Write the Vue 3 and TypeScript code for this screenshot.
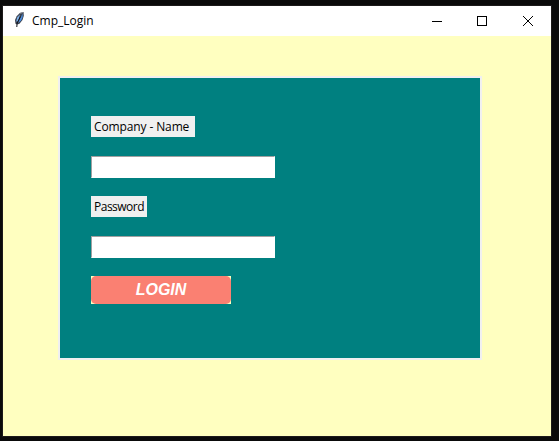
<script setup lang="ts">
import { ref } from 'vue'

const company = ref('')
const password = ref('')
</script>

<template>
  <div class="desktop">
    <main class="window">
      <header class="titlebar">
        <svg class="feather" width="16" height="18" viewBox="0 0 16 18">
          <path d="M3.5 12.8 L3 9 L4.8 5 L7.8 2 L11.6 1 L11.8 4.8 L10.5 9 L7.5 12.8 L5 13.4 Z" fill="#3c4350" />
          <path d="M4.2 10.5 L5.2 6.5 L8 3.5 L6 10.5 Z" fill="#7db2ee" />
          <path d="M6 12 L8 8 L10.7 2.6 L10.6 6.3 L9 9.8 Z" fill="#4a8ee0" />
          <path d="M4.5 5.8 L7.5 2.5 L11.2 1.5" fill="none" stroke="#858b95" stroke-width="1" />
          <path d="M4.8 16 L5.1 12 L8.5 5.5" fill="none" stroke="#10131a" stroke-width="1" />
        </svg>
        <span class="title">Cmp_Login</span>
        <div class="controls">
          <button class="control" aria-label="Minimize">
            <svg width="11" height="11" shape-rendering="crispEdges"><path d="M0 5.5H10" stroke="#000" /></svg>
          </button>
          <button class="control" aria-label="Maximize">
            <svg width="11" height="11" shape-rendering="crispEdges"><rect x="0.5" y="0.5" width="9" height="9" fill="none" stroke="#000" /></svg>
          </button>
          <button class="control" aria-label="Close">
            <svg width="11" height="11"><path d="M0 0L10 10M10 0L0 10" stroke="#000" stroke-width="1" /></svg>
          </button>
        </div>
      </header>
      <form class="panel" @submit.prevent>
        <label class="label company" for="company">Company - Name</label>
        <input id="company" v-model="company" class="entry" type="text" />
        <label class="label password" for="password">Password</label>
        <input id="password" v-model="password" class="entry" type="password" />
        <div class="button-canvas">
          <button class="login" type="submit">LOGIN</button>
        </div>
      </form>
    </main>
  </div>
</template>

<style>
body {
  margin: 0;
  overflow: hidden;
}
</style>

<style scoped>
.desktop {
  box-sizing: border-box;
  width: 559px;
  height: 441px;
  padding: 5px 0 0 2px;
  background: #0a0a0a;
}
.window {
  width: 548px;
  height: 430px;
  border: 1px solid #1c1a1a;
  background: #ffffc0;
  font-family: "Open Sans", "Noto Sans", sans-serif;
  font-size: 12px;
  color: #000;
}
.titlebar {
  display: flex;
  align-items: center;
  box-sizing: border-box;
  height: 30px;
  padding-left: 9px;
  background: #fff;
}
.feather {
  margin-top: -2px;
}
.title {
  margin-left: 4px;
  line-height: 30px;
}
.controls {
  display: flex;
  margin-left: auto;
}
.control {
  display: flex;
  align-items: center;
  justify-content: center;
  width: 45.5px;
  height: 30px;
  padding: 0;
  border: 0;
  background: transparent;
}
.panel {
  box-sizing: border-box;
  display: flex;
  flex-direction: column;
  align-items: flex-start;
  width: 424px;
  height: 284px;
  margin: 40px 0 0 55px;
  padding: 38px 0 0 31px;
  border: 2px solid #f0f0f0;
  background: #008080;
}
.label {
  box-sizing: border-box;
  height: 21px;
  margin: 0 0 19px;
  padding-left: 3px;
  background: #f0f0f0;
  line-height: 21px;
  white-space: nowrap;
}
.company {
  width: 104px;
  letter-spacing: -0.12px;
}
.password {
  width: 56px;
  letter-spacing: -0.5px;
}
.entry {
  box-sizing: border-box;
  width: 184px;
  height: 22px;
  margin: 0 0 18px;
  padding: 0 3px;
  border: 1px solid #fff;
  border-top-color: #a0a0a0;
  border-left-color: #a0a0a0;
  border-radius: 0;
  outline: none;
  background: #fff;
  font: inherit;
}
.button-canvas {
  width: 140px;
  height: 28px;
  background: #ffffc0;
}
.login {
  display: block;
  width: 140px;
  height: 28px;
  padding: 1px 0;
  border: 0;
  border-radius: 5px;
  background: #fa8072;
  color: #fff;
  font: italic bold 16px/26px "Liberation Sans", Arial, sans-serif;
}
</style>
